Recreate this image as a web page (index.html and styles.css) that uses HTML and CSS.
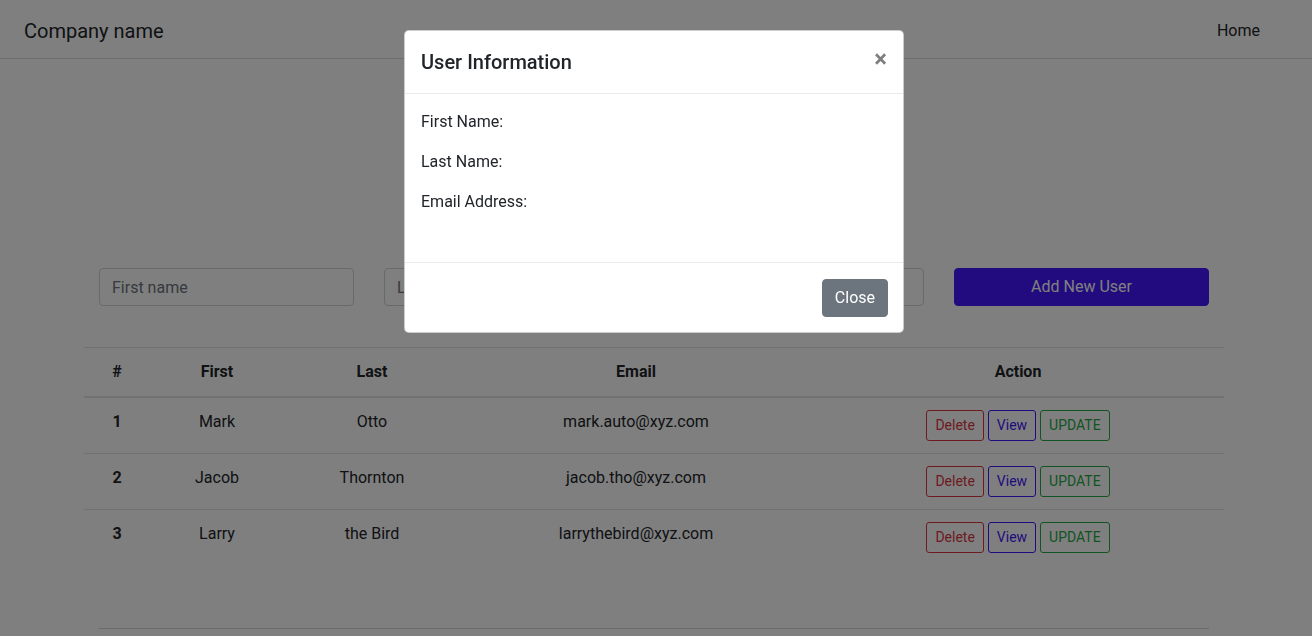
FILE: index.html
```html
<!DOCTYPE html>
<html lang="en">
<head>
<meta charset="utf-8">
<title>Users</title>
<link rel="stylesheet" href="styles.css">
</head>
<body>
<nav class="navbar">
  <span class="brand">Company name</span>
  <a class="nav-link" href="#">Home</a>
</nav>

<main class="container">
  <form class="form-row">
    <input class="form-control" type="text" placeholder="First name">
    <input class="form-control" type="text" placeholder="Last name">
    <input class="form-control" type="text" placeholder="Email">
    <button class="btn btn-add" type="button">Add New User</button>
  </form>

  <table class="table">
    <colgroup>
      <col style="width:66px"><col style="width:134px"><col style="width:176px"><col style="width:352px"><col style="width:412px">
    </colgroup>
    <thead>
      <tr><th>#</th><th>First</th><th>Last</th><th>Email</th><th>Action</th></tr>
    </thead>
    <tbody>
      <tr>
        <th>1</th><td>Mark</td><td>Otto</td><td>mark.auto@xyz.com</td>
        <td class="actions"><button class="btn-sm danger">Delete</button><button class="btn-sm primary">View</button><button class="btn-sm success">UPDATE</button></td>
      </tr>
      <tr>
        <th>2</th><td>Jacob</td><td>Thornton</td><td>jacob.tho@xyz.com</td>
        <td class="actions"><button class="btn-sm danger">Delete</button><button class="btn-sm primary">View</button><button class="btn-sm success">UPDATE</button></td>
      </tr>
      <tr>
        <th>3</th><td>Larry</td><td>the Bird</td><td>larrythebird@xyz.com</td>
        <td class="actions"><button class="btn-sm danger">Delete</button><button class="btn-sm primary">View</button><button class="btn-sm success">UPDATE</button></td>
      </tr>
    </tbody>
  </table>

  <hr class="rule">
</main>

<div class="backdrop"></div>

<div class="modal">
  <div class="modal-content">
    <div class="modal-header">
      <h5 class="modal-title">User Information</h5>
      <button class="close" type="button" aria-label="Close">&times;</button>
    </div>
    <div class="modal-body">
      <p>First Name:</p>
      <p>Last Name:</p>
      <p>Email Address:</p>
    </div>
    <div class="modal-footer">
      <button class="btn btn-secondary" type="button">Close</button>
    </div>
  </div>
</div>
</body>
</html>
```

FILE: styles.css
```css
* { box-sizing: border-box; }
html, body { margin: 0; padding: 0; }
body {
  font-family: Roboto, "Liberation Sans", sans-serif;
  font-size: 16px;
  line-height: 1.5;
  color: #212529;
  background: #fff;
  height: 636px;
  overflow: hidden;
}

.navbar {
  display: flex;
  align-items: center;
  justify-content: space-between;
  height: 58px;
  padding: 1px 52px 0 24px;
  border-bottom: 1px solid #dadada;
  margin-top: 1px;
}
.brand { font-size: 20px; line-height: 30px; color: #212529; margin-top: 2px; }
.nav-link { color: #212529; text-decoration: none; font-size: 16px; margin-top: 2px; }

.container {
  width: 1140px;
  margin-left: calc(50% - 572px);
  padding: 0 15px;
}

.form-row {
  display: grid;
  grid-template-columns: repeat(4, 1fr);
  gap: 30px;
  margin-top: 209px;
}
.form-control {
  height: 38px;
  padding: 6px 12px;
  font: inherit;
  color: #495057;
  border: 1px solid #ced4da;
  border-radius: 4px;
  background: #fff;
}
.form-control::placeholder { color: #6c757d; }
.btn {
  font: inherit;
  height: 38px;
  border: 1px solid transparent;
  border-radius: 4px;
  color: #fff;
  cursor: pointer;
}
.btn-add { background: #4216fc; border-color: #4216fc; }

.table {
  width: 1140px;
  margin-left: -15px;
  margin-top: 41px;
  border-collapse: collapse;
  table-layout: fixed;
}
.table th, .table td {
  padding: 12px;
  text-align: center;
  vertical-align: top;
  border-top: 1px solid #dee2e6;
}
.table thead th {
  font-weight: 700;
  border-bottom: 2px solid #dee2e6;
}
.table tbody th { font-weight: 700; }
.actions { font-size: 0; line-height: 0; }
.btn-sm {
  font-family: inherit;
  font-size: 14px;
  line-height: 21px;
  padding: 4px 8px;
  margin: 0 2px;
  vertical-align: top;
  background: transparent;
  border: 1px solid;
  border-radius: 3px;
}
.danger { color: #dc3545; border-color: #dc3545; }
.primary { color: #4216fc; border-color: #4216fc; }
.success { color: #28a745; border-color: #28a745; }

.rule {
  margin: 63px 0 0;
  border: 0;
  border-top: 1px solid #d4d4d4;
}

.backdrop {
  position: fixed;
  inset: 0;
  background: rgba(0, 0, 0, 0.5);
}

.modal {
  position: fixed;
  top: 30px;
  left: 404px;
  width: 500px;
}
.modal-content {
  background: #fff;
  border: 1px solid rgba(0, 0, 0, 0.2);
  border-radius: 5px;
  overflow: hidden;
}
.modal-header {
  display: flex;
  justify-content: space-between;
  align-items: flex-start;
  padding: 16px;
  border-bottom: 1px solid #e9ecef;
}
.modal-title {
  margin: 0;
  font-size: 20px;
  font-weight: 500;
  line-height: 30px;
}
.close {
  background: none;
  border: 0;
  padding: 0;
  margin: 0;
  font-family: inherit;
  font-size: 24px;
  font-weight: 700;
  line-height: 1;
  color: #000;
  opacity: 0.5;
}
.modal-body {
  padding: 16px;
  height: 168px;
}
.modal-body p { margin: 0 0 16px; }
.modal-footer {
  display: flex;
  justify-content: flex-end;
  padding: 16px 15px 15px;
  border-top: 1px solid #e9ecef;
}
.btn-secondary {
  background: #6c757d;
  border-color: #6c757d;
  padding: 0 12px;
}
```
